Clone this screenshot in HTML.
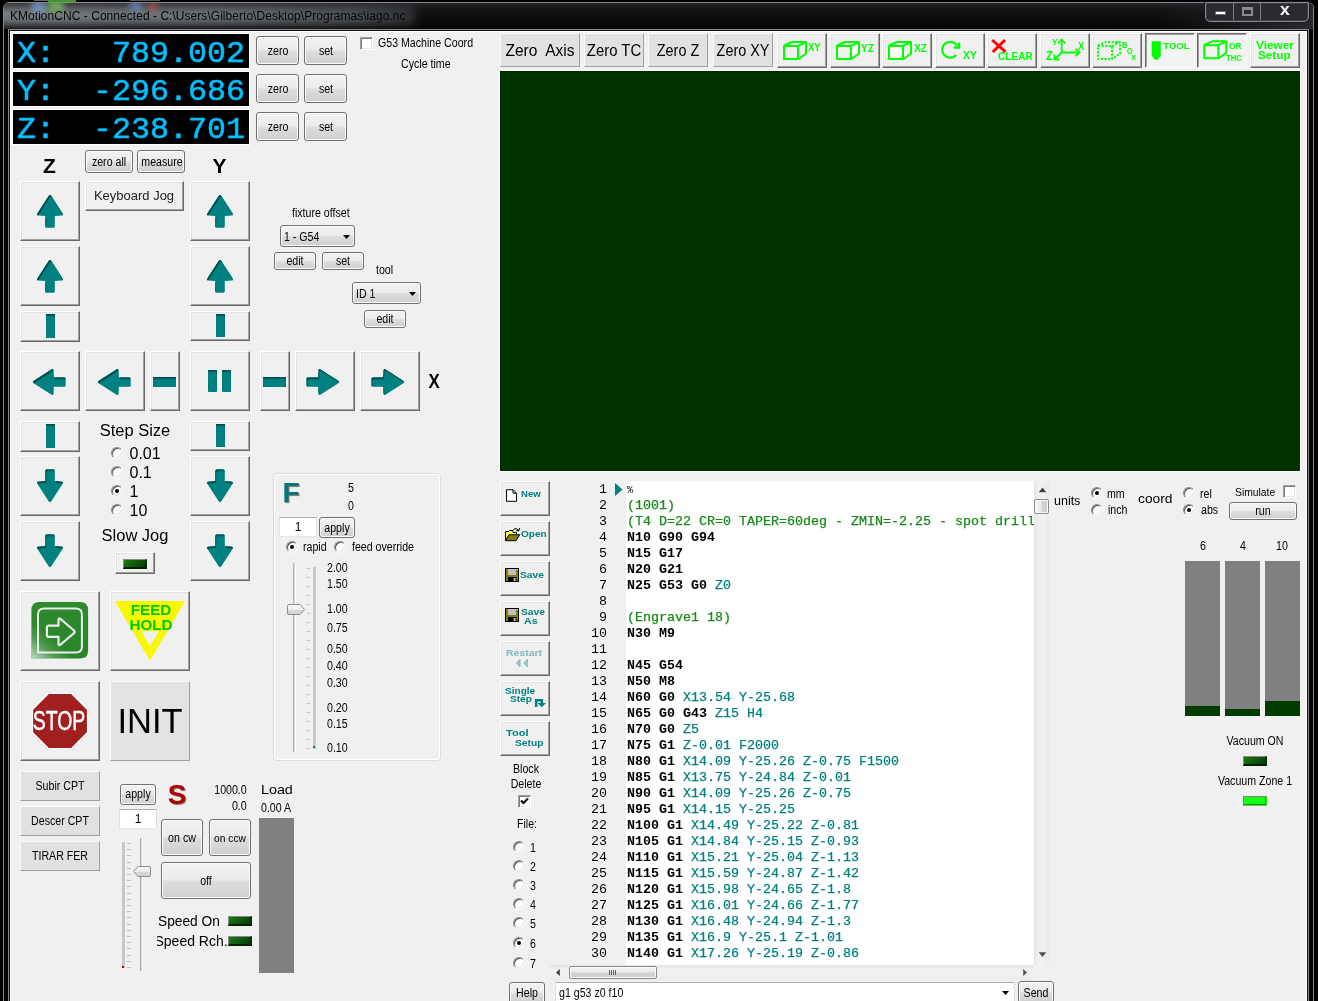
<!DOCTYPE html>
<html><head><meta charset="utf-8"><title>KMotionCNC</title>
<style>
*{box-sizing:border-box;margin:0;padding:0}
html,body{width:1318px;height:1001px;overflow:hidden;background:#000}
body{position:relative;font-family:"Liberation Sans",sans-serif;font-size:11px;color:#000}
div,span.t,svg{position:absolute}
span.t{white-space:nowrap;display:block}
#client{left:10px;top:31px;width:1297px;height:970px;background:#f0f0f0;border-left:1px solid #fff;border-top:1px solid #fff;border-right:1px solid #fff}
.cb{background:#f0f0f0;border:1px solid;border-color:#fff #696969 #696969 #fff;box-shadow:inset -1px -1px 0 #a0a0a0,inset 1px 1px 0 #e3e3e3}
.cbp{background:#f3f3f3;border:1px solid;border-color:#696969 #fff #fff #696969;box-shadow:inset 1px 1px 0 #a0a0a0}
.fb{background:#e1e1e1;border:1px solid;border-color:#fbfbfb #a0a0a0 #a0a0a0 #fbfbfb}
.wb{border:1px solid #707070;border-radius:3px;background:linear-gradient(#f2f2f2 0,#ebebeb 48%,#dddddd 52%,#cfcfcf 100%);box-shadow:inset 0 0 0 1px #fcfcfc;text-align:center}
.ed{background:#fff;border:1px solid;border-color:#abadb3 #dbdfe6 #e3e9ef #e2e3ea}
.dro{background:#000;outline:1px solid #fff}
.rad{width:12px;height:12px;border-radius:50%;background:#fff;border:1px solid;border-color:#8a8a8a #fafafa #fafafa #8a8a8a;box-shadow:inset 1px 1px 0 #5a5a5a, inset -1px -1px 0 #e4e4e4}
.rad.on:after{content:"";position:absolute;left:3px;top:3px;width:4px;height:4px;border-radius:50%;background:#000}
.chk{background:#fff;border:1px solid;border-color:#a0a0a0 #fff #fff #a0a0a0;box-shadow:inset 1px 1px 0 #7a7a7a, inset -1px -1px 0 #e8e8e8}
.led{background:linear-gradient(135deg,#1f7a12 0,#0f5a0c 50%,#073a07 100%);border:solid;border-width:1px 2px 2px 1px;border-color:#8a8a8a #063006 #042004 #8a8a8a}
.ledon{background:#14ff14;border:1px solid;border-color:#808080 #14ff14 #14ff14 #808080;box-shadow:inset -1px -1px 0 #606060}
.tick{background:#c0c0c0;height:1px}
</style></head><body><div id="w" style="left:0;top:0;width:1318px;height:1001px;will-change:transform">

<div style="left:0;top:0;width:1318px;height:1001px;background:#000"></div>
<div style="left:3px;top:2px;width:1311px;height:1010px;border:1px solid #85878b;border-radius:6px 6px 0 0;background:#050507"></div>
<div style="left:4px;top:3px;width:1309px;height:26px;border-radius:5px 5px 0 0;background:linear-gradient(90deg,rgba(0,0,0,0) 0,rgba(0,0,0,0) 88%,rgba(44,45,50,.9) 100%),linear-gradient(#222326 0,#101112 30%,#060607 100%)"></div>
<div style="left:4px;top:3px;width:460px;height:26px;overflow:hidden;border-radius:5px 0 0 0"><div style="left:-14px;top:3px;width:425px;height:19px;background:linear-gradient(90deg,rgba(128,133,138,.95) 0,rgba(118,122,127,.9) 55%,rgba(100,104,108,.75) 85%,rgba(80,83,86,.5) 100%);filter:blur(5px)"></div><div style="left:28px;top:-2px;width:14px;height:12px;background:rgba(120,160,215,.8);filter:blur(3px)"></div><div style="left:44px;top:-3px;width:16px;height:12px;background:rgba(120,190,90,.8);filter:blur(3px)"></div><div style="left:126px;top:-2px;width:12px;height:10px;background:rgba(110,150,210,.7);filter:blur(3px)"></div><div style="left:144px;top:-1px;width:10px;height:9px;background:rgba(200,90,90,.6);filter:blur(3px)"></div></div>
<div style="left:48px;top:0;width:28px;height:2px;background:#3f9a1f"></div><div style="left:34px;top:0;width:14px;height:1px;background:#666"></div><div style="left:130px;top:0;width:30px;height:1px;background:#555"></div>
<span class="t " style="top:10.00px;font-size:12px;line-height:12px;color:#050505;letter-spacing:0.04px;left:10px;">KMotionCNC - Connected - C:\Users\Gilberto\Desktop\Programas\iago.nc</span>
<div style="left:8px;top:29px;width:1301px;height:980px;border:1px solid #8a8c90;background:#101012"></div>
<div style="left:1205px;top:2px;width:104px;height:20px;border:1px solid #85878b;border-radius:0 0 5px 5px;background:#2a2b30;box-shadow:inset 0 0 0 1px #3e3f45,0 0 0 1px #18181a"></div>
<div style="left:1233px;top:2px;width:1px;height:18px;background:#7a7c80"></div>
<div style="left:1260px;top:2px;width:1px;height:18px;background:#7a7c80"></div>
<div style="left:1215px;top:11px;width:11px;height:4px;background:#fff;border:1px solid #666"></div>
<div style="left:1242px;top:7px;width:11px;height:9px;border:2px solid #8a8a8a;border-top-width:3px"></div>
<span class="t " style="top:1.00px;font-size:16.3px;line-height:16.3px;color:#fff;font-weight:bold;left:1134.7px;width:300px;text-align:center;transform:scaleX(1.08);transform-origin:center center;">x</span>
<div id="client"></div>
<svg width="0" height="0" style="left:0;top:0"><defs><filter id="ish" x="-20%" y="-20%" width="140%" height="140%"><feOffset in="SourceAlpha" dx="0.5" dy="1.6" result="o"/><feComposite in="SourceAlpha" in2="o" operator="out" result="e"/><feFlood flood-color="#003838" flood-opacity=".8"/><feComposite in2="e" operator="in"/><feGaussianBlur stdDeviation=".45" result="b"/><feComposite in="b" in2="SourceAlpha" operator="in" result="sh"/><feMerge><feMergeNode in="SourceGraphic"/><feMergeNode in="sh"/></feMerge></filter></defs></svg>
<div class="dro" style="left:13px;top:34px;width:236px;height:34px;"></div>
<span class="t" style="left:16.5px;top:37px;font:30px/34px 'Liberation Mono',monospace;color:#00bfff;-webkit-text-stroke:.55px #00bfff;white-space:pre;transform:scaleX(1.055);transform-origin:left center">X:   789.002</span>
<div class="wb" style="left:256px;top:36px;width:43px;height:29px;"></div>
<span class="t " style="top:45.00px;font-size:12px;line-height:12px;left:127.5px;width:300px;text-align:center;transform:scaleX(0.885);transform-origin:center center;">zero</span>
<div class="wb" style="left:304px;top:36px;width:43px;height:29px;"></div>
<span class="t " style="top:45.00px;font-size:12px;line-height:12px;left:175.5px;width:300px;text-align:center;transform:scaleX(0.885);transform-origin:center center;">set</span>
<div class="dro" style="left:13px;top:72px;width:236px;height:34px;"></div>
<span class="t" style="left:16.5px;top:75px;font:30px/34px 'Liberation Mono',monospace;color:#00bfff;-webkit-text-stroke:.55px #00bfff;white-space:pre;transform:scaleX(1.055);transform-origin:left center">Y:  -296.686</span>
<div class="wb" style="left:256px;top:74px;width:43px;height:29px;"></div>
<span class="t " style="top:83.00px;font-size:12px;line-height:12px;left:127.5px;width:300px;text-align:center;transform:scaleX(0.885);transform-origin:center center;">zero</span>
<div class="wb" style="left:304px;top:74px;width:43px;height:29px;"></div>
<span class="t " style="top:83.00px;font-size:12px;line-height:12px;left:175.5px;width:300px;text-align:center;transform:scaleX(0.885);transform-origin:center center;">set</span>
<div class="dro" style="left:13px;top:110px;width:236px;height:34px;"></div>
<span class="t" style="left:16.5px;top:113px;font:30px/34px 'Liberation Mono',monospace;color:#00bfff;-webkit-text-stroke:.55px #00bfff;white-space:pre;transform:scaleX(1.055);transform-origin:left center">Z:  -238.701</span>
<div class="wb" style="left:256px;top:112px;width:43px;height:29px;"></div>
<span class="t " style="top:121.00px;font-size:12px;line-height:12px;left:127.5px;width:300px;text-align:center;transform:scaleX(0.885);transform-origin:center center;">zero</span>
<div class="wb" style="left:304px;top:112px;width:43px;height:29px;"></div>
<span class="t " style="top:121.00px;font-size:12px;line-height:12px;left:175.5px;width:300px;text-align:center;transform:scaleX(0.885);transform-origin:center center;">set</span>
<div class="chk" style="left:360px;top:37px;width:13px;height:13px;"></div>
<span class="t " style="top:37.00px;font-size:12px;line-height:12px;left:377.5px;transform:scaleX(0.885);transform-origin:left center;">G53 Machine Coord</span>
<span class="t " style="top:58.00px;font-size:12px;line-height:12px;left:401px;transform:scaleX(0.885);transform-origin:left center;">Cycle time</span>
<div class="wb" style="left:85px;top:150px;width:48px;height:23px;"></div>
<span class="t " style="top:156.00px;font-size:12px;line-height:12px;left:-41px;width:300px;text-align:center;transform:scaleX(0.885);transform-origin:center center;">zero all</span>
<div class="wb" style="left:137px;top:150px;width:48px;height:23px;"></div>
<span class="t " style="top:156.00px;font-size:12px;line-height:12px;left:11.5px;width:300px;text-align:center;transform:scaleX(0.885);transform-origin:center center;">measure</span>
<div class="cb" style="left:85px;top:181px;width:99px;height:30px;"></div>
<span class="t " style="top:189.00px;font-size:13px;line-height:13px;color:#222;left:-16px;width:300px;text-align:center;">Keyboard Jog</span>
<span class="t " style="top:155.00px;font-size:21px;line-height:21px;font-weight:bold;left:-100.5px;width:300px;text-align:center;">Z</span>
<span class="t " style="top:155.00px;font-size:21px;line-height:21px;font-weight:bold;left:69.5px;width:300px;text-align:center;">Y</span>
<span class="t " style="top:370.00px;font-size:21px;line-height:21px;font-weight:bold;left:284.3px;width:300px;text-align:center;transform:scaleX(0.8);transform-origin:center center;">X</span>
<span class="t " style="top:207.00px;font-size:12px;line-height:12px;left:291.5px;transform:scaleX(0.885);transform-origin:left center;">fixture offset</span>
<div class="wb" style="left:280px;top:225px;width:75px;height:22px;"></div>
<span class="t " style="top:231.00px;font-size:12px;line-height:12px;left:284px;transform:scaleX(0.885);transform-origin:left center;">1 - G54</span>
<svg style="position:absolute;left:342.5px;top:234.5px;" width="7" height="4" viewBox="0 0 7 4"><path d="M0 0h7L3.5 4z" fill="#000"/></svg>
<div class="wb" style="left:274px;top:252px;width:42px;height:18px;"></div>
<span class="t " style="top:255.00px;font-size:12px;line-height:12px;left:145px;width:300px;text-align:center;transform:scaleX(0.885);transform-origin:center center;">edit</span>
<div class="wb" style="left:322px;top:252px;width:42px;height:18px;"></div>
<span class="t " style="top:255.00px;font-size:12px;line-height:12px;left:193px;width:300px;text-align:center;transform:scaleX(0.885);transform-origin:center center;">set</span>
<span class="t " style="top:264.00px;font-size:12px;line-height:12px;left:375.5px;transform:scaleX(0.885);transform-origin:left center;">tool</span>
<div class="wb" style="left:352px;top:282px;width:69px;height:22px;"></div>
<span class="t " style="top:288.00px;font-size:12px;line-height:12px;left:356px;transform:scaleX(0.885);transform-origin:left center;">ID 1</span>
<svg style="position:absolute;left:408.5px;top:291.5px;" width="7" height="4" viewBox="0 0 7 4"><path d="M0 0h7L3.5 4z" fill="#000"/></svg>
<div class="wb" style="left:364px;top:310px;width:42px;height:18px;"></div>
<span class="t " style="top:313.00px;font-size:12px;line-height:12px;left:235px;width:300px;text-align:center;transform:scaleX(0.885);transform-origin:center center;">edit</span>
<div class="cb" style="left:20px;top:181px;width:60px;height:60px;"></div>
<svg style="left:29.5px;top:190.5px" width="40" height="40" viewBox="-20 -20 40 40"><g filter="url(#ish)"><path transform="rotate(0)" d="M0 -16.3 Q.8 -16 1.5 -15 L12.8 2.6 Q13.6 4.6 11.6 4.6 L4.8 4.9 L4.8 15.2 Q4.8 16.7 3.3 16.7 L-3.3 16.7 Q-4.8 16.7 -4.8 15.2 L-4.8 4.9 L-11.6 4.6 Q-13.6 4.6 -12.8 2.6 L-1.5 -15 Q-.8 -16 0 -16.3 Z" fill="#008080"/></g></svg>
<div class="cb" style="left:20px;top:246px;width:60px;height:60px;"></div>
<svg style="left:29.5px;top:255.5px" width="40" height="40" viewBox="-20 -20 40 40"><g filter="url(#ish)"><path transform="rotate(0)" d="M0 -16.3 Q.8 -16 1.5 -15 L12.8 2.6 Q13.6 4.6 11.6 4.6 L4.8 4.9 L4.8 15.2 Q4.8 16.7 3.3 16.7 L-3.3 16.7 Q-4.8 16.7 -4.8 15.2 L-4.8 4.9 L-11.6 4.6 Q-13.6 4.6 -12.8 2.6 L-1.5 -15 Q-.8 -16 0 -16.3 Z" fill="#008080"/></g></svg>
<div class="cb" style="left:20px;top:311px;width:60px;height:31px;"></div>
<div style="left:46px;top:314px;width:9px;height:24px;background:#008080;box-shadow:inset 0 1.5px 1px #004848"></div>
<div class="cb" style="left:20px;top:421px;width:60px;height:31px;"></div>
<div style="left:46px;top:424px;width:9px;height:24px;background:#008080;box-shadow:inset 0 1.5px 1px #004848"></div>
<div class="cb" style="left:20px;top:456px;width:60px;height:60px;"></div>
<svg style="left:29.5px;top:465.5px" width="40" height="40" viewBox="-20 -20 40 40"><g filter="url(#ish)"><path transform="rotate(180)" d="M0 -16.3 Q.8 -16 1.5 -15 L12.8 2.6 Q13.6 4.6 11.6 4.6 L4.8 4.9 L4.8 15.2 Q4.8 16.7 3.3 16.7 L-3.3 16.7 Q-4.8 16.7 -4.8 15.2 L-4.8 4.9 L-11.6 4.6 Q-13.6 4.6 -12.8 2.6 L-1.5 -15 Q-.8 -16 0 -16.3 Z" fill="#008080"/></g></svg>
<div class="cb" style="left:20px;top:521px;width:60px;height:60px;"></div>
<svg style="left:29.5px;top:530.5px" width="40" height="40" viewBox="-20 -20 40 40"><g filter="url(#ish)"><path transform="rotate(180)" d="M0 -16.3 Q.8 -16 1.5 -15 L12.8 2.6 Q13.6 4.6 11.6 4.6 L4.8 4.9 L4.8 15.2 Q4.8 16.7 3.3 16.7 L-3.3 16.7 Q-4.8 16.7 -4.8 15.2 L-4.8 4.9 L-11.6 4.6 Q-13.6 4.6 -12.8 2.6 L-1.5 -15 Q-.8 -16 0 -16.3 Z" fill="#008080"/></g></svg>
<div class="cb" style="left:190px;top:181px;width:60px;height:60px;"></div>
<svg style="left:199.5px;top:190.5px" width="40" height="40" viewBox="-20 -20 40 40"><g filter="url(#ish)"><path transform="rotate(0)" d="M0 -16.3 Q.8 -16 1.5 -15 L12.8 2.6 Q13.6 4.6 11.6 4.6 L4.8 4.9 L4.8 15.2 Q4.8 16.7 3.3 16.7 L-3.3 16.7 Q-4.8 16.7 -4.8 15.2 L-4.8 4.9 L-11.6 4.6 Q-13.6 4.6 -12.8 2.6 L-1.5 -15 Q-.8 -16 0 -16.3 Z" fill="#008080"/></g></svg>
<div class="cb" style="left:190px;top:246px;width:60px;height:60px;"></div>
<svg style="left:199.5px;top:255.5px" width="40" height="40" viewBox="-20 -20 40 40"><g filter="url(#ish)"><path transform="rotate(0)" d="M0 -16.3 Q.8 -16 1.5 -15 L12.8 2.6 Q13.6 4.6 11.6 4.6 L4.8 4.9 L4.8 15.2 Q4.8 16.7 3.3 16.7 L-3.3 16.7 Q-4.8 16.7 -4.8 15.2 L-4.8 4.9 L-11.6 4.6 Q-13.6 4.6 -12.8 2.6 L-1.5 -15 Q-.8 -16 0 -16.3 Z" fill="#008080"/></g></svg>
<div class="cb" style="left:190px;top:311px;width:60px;height:30px;"></div>
<div style="left:216px;top:314px;width:9px;height:23px;background:#008080;box-shadow:inset 0 1.5px 1px #004848"></div>
<div class="cb" style="left:190px;top:421px;width:60px;height:30px;"></div>
<div style="left:216px;top:424px;width:9px;height:23px;background:#008080;box-shadow:inset 0 1.5px 1px #004848"></div>
<div class="cb" style="left:190px;top:456px;width:60px;height:60px;"></div>
<svg style="left:199.5px;top:465.5px" width="40" height="40" viewBox="-20 -20 40 40"><g filter="url(#ish)"><path transform="rotate(180)" d="M0 -16.3 Q.8 -16 1.5 -15 L12.8 2.6 Q13.6 4.6 11.6 4.6 L4.8 4.9 L4.8 15.2 Q4.8 16.7 3.3 16.7 L-3.3 16.7 Q-4.8 16.7 -4.8 15.2 L-4.8 4.9 L-11.6 4.6 Q-13.6 4.6 -12.8 2.6 L-1.5 -15 Q-.8 -16 0 -16.3 Z" fill="#008080"/></g></svg>
<div class="cb" style="left:190px;top:521px;width:60px;height:60px;"></div>
<svg style="left:199.5px;top:530.5px" width="40" height="40" viewBox="-20 -20 40 40"><g filter="url(#ish)"><path transform="rotate(180)" d="M0 -16.3 Q.8 -16 1.5 -15 L12.8 2.6 Q13.6 4.6 11.6 4.6 L4.8 4.9 L4.8 15.2 Q4.8 16.7 3.3 16.7 L-3.3 16.7 Q-4.8 16.7 -4.8 15.2 L-4.8 4.9 L-11.6 4.6 Q-13.6 4.6 -12.8 2.6 L-1.5 -15 Q-.8 -16 0 -16.3 Z" fill="#008080"/></g></svg>
<div class="cb" style="left:20px;top:351px;width:60px;height:60px;"></div>
<svg style="left:28.799999999999997px;top:361.5px" width="40" height="40" viewBox="-20 -20 40 40"><g filter="url(#ish)"><path transform="rotate(270)" d="M0 -16.3 Q.8 -16 1.5 -15 L12.8 2.6 Q13.6 4.6 11.6 4.6 L4.8 4.9 L4.8 15.2 Q4.8 16.7 3.3 16.7 L-3.3 16.7 Q-4.8 16.7 -4.8 15.2 L-4.8 4.9 L-11.6 4.6 Q-13.6 4.6 -12.8 2.6 L-1.5 -15 Q-.8 -16 0 -16.3 Z" fill="#008080"/></g></svg>
<div class="cb" style="left:85px;top:351px;width:60px;height:60px;"></div>
<svg style="left:93.8px;top:361.5px" width="40" height="40" viewBox="-20 -20 40 40"><g filter="url(#ish)"><path transform="rotate(270)" d="M0 -16.3 Q.8 -16 1.5 -15 L12.8 2.6 Q13.6 4.6 11.6 4.6 L4.8 4.9 L4.8 15.2 Q4.8 16.7 3.3 16.7 L-3.3 16.7 Q-4.8 16.7 -4.8 15.2 L-4.8 4.9 L-11.6 4.6 Q-13.6 4.6 -12.8 2.6 L-1.5 -15 Q-.8 -16 0 -16.3 Z" fill="#008080"/></g></svg>
<div class="cb" style="left:150px;top:351px;width:30px;height:60px;"></div>
<div style="left:153px;top:377px;width:23px;height:10px;background:#008080;box-shadow:inset 0 1.5px 1px #004848"></div>
<div class="cb" style="left:190px;top:351px;width:60px;height:60px;"></div>
<div style="left:208px;top:370px;width:9px;height:22px;background:#008080;border-radius:1px;box-shadow:inset 0 1.5px 1px #004848"></div>
<div style="left:222px;top:370px;width:9px;height:22px;background:#008080;border-radius:1px;box-shadow:inset 0 1.5px 1px #004848"></div>
<div class="cb" style="left:260px;top:351px;width:30px;height:60px;"></div>
<div style="left:263px;top:377px;width:23px;height:10px;background:#008080;box-shadow:inset 0 1.5px 1px #004848"></div>
<div class="cb" style="left:295px;top:351px;width:60px;height:60px;"></div>
<svg style="left:303.2px;top:361.5px" width="40" height="40" viewBox="-20 -20 40 40"><g filter="url(#ish)"><path transform="rotate(90)" d="M0 -16.3 Q.8 -16 1.5 -15 L12.8 2.6 Q13.6 4.6 11.6 4.6 L4.8 4.9 L4.8 15.2 Q4.8 16.7 3.3 16.7 L-3.3 16.7 Q-4.8 16.7 -4.8 15.2 L-4.8 4.9 L-11.6 4.6 Q-13.6 4.6 -12.8 2.6 L-1.5 -15 Q-.8 -16 0 -16.3 Z" fill="#008080"/></g></svg>
<div class="cb" style="left:360px;top:351px;width:60px;height:60px;"></div>
<svg style="left:368.2px;top:361.5px" width="40" height="40" viewBox="-20 -20 40 40"><g filter="url(#ish)"><path transform="rotate(90)" d="M0 -16.3 Q.8 -16 1.5 -15 L12.8 2.6 Q13.6 4.6 11.6 4.6 L4.8 4.9 L4.8 15.2 Q4.8 16.7 3.3 16.7 L-3.3 16.7 Q-4.8 16.7 -4.8 15.2 L-4.8 4.9 L-11.6 4.6 Q-13.6 4.6 -12.8 2.6 L-1.5 -15 Q-.8 -16 0 -16.3 Z" fill="#008080"/></g></svg>
<span class="t " style="top:423.00px;font-size:16px;line-height:16px;left:-15.199999999999989px;width:300px;text-align:center;transform:scaleX(1.03);transform-origin:center center;">Step Size</span>
<div class="rad" style="left:111px;top:447px;width:12px;height:12px;"></div>
<span class="t " style="top:446.00px;font-size:16px;line-height:16px;left:129.5px;">0.01</span>
<div class="rad" style="left:111px;top:466px;width:12px;height:12px;"></div>
<span class="t " style="top:465.00px;font-size:16px;line-height:16px;left:129.5px;">0.1</span>
<div class="rad on" style="left:111px;top:485px;width:12px;height:12px;"></div>
<span class="t " style="top:484.00px;font-size:16px;line-height:16px;left:129.5px;">1</span>
<div class="rad" style="left:111px;top:504px;width:12px;height:12px;"></div>
<span class="t " style="top:503.00px;font-size:16px;line-height:16px;left:129.5px;">10</span>
<span class="t " style="top:528.00px;font-size:16px;line-height:16px;left:-15px;width:300px;text-align:center;transform:scaleX(1.03);transform-origin:center center;">Slow Jog</span>
<div class="cb" style="left:115px;top:552px;width:40px;height:22px;"></div>
<div class="led" style="left:123px;top:559px;width:24px;height:10px;"></div>
<div class="cb" style="left:20px;top:591px;width:80px;height:80px;"></div>
<svg style="position:absolute;left:31px;top:601px;" width="58" height="59" viewBox="0 0 58 59"><defs><linearGradient id="gg" x1="0" y1="0" x2="0" y2="1"><stop offset="0" stop-color="#2d8a2d"/><stop offset="1" stop-color="#2a8429"/></linearGradient>
<linearGradient id="gw" x1="0" y1="1" x2=".55" y2=".35"><stop offset="0" stop-color="#fff" stop-opacity=".7"/><stop offset=".35" stop-color="#fff" stop-opacity=".18"/><stop offset=".6" stop-color="#fff" stop-opacity="0"/></linearGradient></defs>
<path d="M8.5 .9 H49 Q57.1 .9 57.1 9 V49.5 Q57.1 57.6 49 57.6 H.4 V9 Q.4 .9 8.5 .9 Z" fill="url(#gg)"/>
<path d="M8.5 .9 H49 Q57.1 .9 57.1 9 V49.5 Q57.1 57.6 49 57.6 H.4 V9 Q.4 .9 8.5 .9 Z" fill="url(#gw)"/>
<path d="M7 51.5 V13.4 Q7 7.4 13 7.4 H44.9 Q50.9 7.4 50.9 13.4 V45.5 Q50.9 51.5 44.9 51.5 Z" fill="none" stroke="#ececec" stroke-width="2"/>
<path d="M15.9 26.7 Q15.9 24.7 17.9 24.7 H27.5 V19.3 Q27.5 16.4 29.7 18.2 L43 29.5 Q44.4 30.9 43 32.2 L29.7 43.5 Q27.5 45.3 27.5 42.4 V35.9 H17.9 Q15.9 35.9 15.9 33.9 Z" fill="none" stroke="#ececec" stroke-width="2.2" stroke-linejoin="round"/></svg>
<div class="cb" style="left:110px;top:591px;width:80px;height:80px;"></div>
<svg style="position:absolute;left:114px;top:599px;" width="72" height="62" viewBox="0 0 72 62"><path d="M3 2 H69 Q71 2 70 4 L37 60 Q36 61.5 35 60 L2 4 Q1 2 3 2 Z" fill="#f8f800"/><path d="M27 32 H45 L36 47 Z" fill="#f0f0f0"/></svg>
<span class="t " style="top:602.00px;font-size:15.5px;line-height:15.5px;color:#00c800;font-weight:bold;left:0.5999999999999943px;width:300px;text-align:center;transform:scaleX(0.98);transform-origin:center center;">FEED</span>
<span class="t " style="top:617.00px;font-size:15.5px;line-height:15.5px;color:#00c800;font-weight:bold;left:0.5999999999999943px;width:300px;text-align:center;transform:scaleX(0.98);transform-origin:center center;">HOLD</span>
<div class="cb" style="left:20px;top:681px;width:80px;height:80px;"></div>
<svg style="position:absolute;left:31px;top:692px;" width="58" height="58" viewBox="0 0 58 58"><path d="M17.5 1.5 H40.5 L56.5 17.5 V40.5 L40.5 56.5 H17.5 L1.5 40.5 V17.5 Z" fill="#a02020" stroke="#fff" stroke-width="1.2"/></svg>
<span class="t " style="top:708.00px;font-size:27px;line-height:27px;color:#fff;left:-90.8px;width:300px;text-align:center;transform:scaleX(0.72);transform-origin:center center;-webkit-text-stroke:.5px #fff;">STOP</span>
<div class="fb" style="left:110px;top:681px;width:80px;height:80px;background:#e3e3e3"></div>
<span class="t " style="top:704.00px;font-size:34.5px;line-height:34.5px;left:0px;width:300px;text-align:center;">INIT</span>
<div class="fb" style="left:20px;top:771px;width:80px;height:30px;"></div>
<span class="t " style="top:780.00px;font-size:12px;line-height:12px;left:-90.3px;width:300px;text-align:center;transform:scaleX(0.885);transform-origin:center center;">Subir CPT</span>
<div class="fb" style="left:20px;top:806px;width:80px;height:30px;"></div>
<span class="t " style="top:815.00px;font-size:12px;line-height:12px;left:-90.3px;width:300px;text-align:center;transform:scaleX(0.885);transform-origin:center center;">Descer CPT</span>
<div class="fb" style="left:20px;top:841px;width:80px;height:30px;"></div>
<span class="t " style="top:850.00px;font-size:12px;line-height:12px;left:-90.3px;width:300px;text-align:center;transform:scaleX(0.885);transform-origin:center center;">TIRAR FER</span>
<div class="wb" style="left:120px;top:784px;width:36px;height:21px;"></div>
<span class="t " style="top:788.00px;font-size:12px;line-height:12px;left:-12px;width:300px;text-align:center;transform:scaleX(0.885);transform-origin:center center;">apply</span>
<div class="ed" style="left:119px;top:809px;width:38px;height:20px;"></div>
<span class="t " style="top:813.00px;font-size:12px;line-height:12px;left:-12px;width:300px;text-align:center;">1</span>
<span class="t " style="top:781.00px;font-size:28px;line-height:28px;color:#b00000;font-weight:bold;left:27px;width:300px;text-align:center;text-shadow:1px 1px 1px #777;">S</span>
<span class="t " style="top:784.00px;font-size:12px;line-height:12px;right:1071.5px;transform:scaleX(0.885);transform-origin:right center;">1000.0</span>
<span class="t " style="top:800.00px;font-size:12px;line-height:12px;right:1071.5px;transform:scaleX(0.885);transform-origin:right center;">0.0</span>
<span class="t " style="top:783.00px;font-size:13px;line-height:13px;left:260.5px;transform:scaleX(1.1);transform-origin:left center;">Load</span>
<span class="t " style="top:802.00px;font-size:12px;line-height:12px;left:261px;transform:scaleX(0.885);transform-origin:left center;">0.00 A</span>
<div class="" style="left:259px;top:818px;width:35px;height:155px;background:#808080"></div>
<div class="wb" style="left:161px;top:819px;width:42px;height:37px;"></div>
<span class="t " style="top:832.00px;font-size:12px;line-height:12px;left:32px;width:300px;text-align:center;transform:scaleX(0.885);transform-origin:center center;">on cw</span>
<div class="wb" style="left:209px;top:819px;width:42px;height:37px;"></div>
<span class="t " style="top:833.00px;font-size:11px;line-height:11px;left:80px;width:300px;text-align:center;transform:scaleX(0.93);transform-origin:center center;">on ccw</span>
<div class="wb" style="left:161px;top:862px;width:90px;height:37px;"></div>
<span class="t " style="top:875.00px;font-size:12px;line-height:12px;left:56px;width:300px;text-align:center;transform:scaleX(0.885);transform-origin:center center;">off</span>
<span class="t " style="top:914.00px;font-size:14px;line-height:14px;left:158.2px;transform:scaleX(0.98);transform-origin:left center;">Speed On</span>
<div class="led" style="left:228px;top:916px;width:24px;height:10px;"></div>
<div style="left:157px;top:930px;width:70px;height:20px;overflow:hidden"><span class="t" style="left:-2.5px;top:4px;font-size:14px;line-height:14px">Speed Rch.</span></div>
<div class="led" style="left:228px;top:936px;width:24px;height:10px;"></div>
<div class="" style="left:122px;top:842px;width:3px;height:126px;background:#c8c8c8"></div>
<div class="tick" style="left:127px;top:843.0px;width:4px;height:1px;"></div>
<div class="tick" style="left:127px;top:849.2px;width:4px;height:1px;"></div>
<div class="tick" style="left:127px;top:855.4px;width:4px;height:1px;"></div>
<div class="tick" style="left:127px;top:861.6px;width:4px;height:1px;"></div>
<div class="tick" style="left:127px;top:867.8px;width:4px;height:1px;"></div>
<div class="tick" style="left:127px;top:874.0px;width:4px;height:1px;"></div>
<div class="tick" style="left:127px;top:880.2px;width:4px;height:1px;"></div>
<div class="tick" style="left:127px;top:886.4px;width:4px;height:1px;"></div>
<div class="tick" style="left:127px;top:892.6px;width:4px;height:1px;"></div>
<div class="tick" style="left:127px;top:898.8px;width:4px;height:1px;"></div>
<div class="tick" style="left:127px;top:905.0px;width:4px;height:1px;"></div>
<div class="tick" style="left:127px;top:911.2px;width:4px;height:1px;"></div>
<div class="tick" style="left:127px;top:917.4px;width:4px;height:1px;"></div>
<div class="tick" style="left:127px;top:923.6px;width:4px;height:1px;"></div>
<div class="tick" style="left:127px;top:929.8px;width:4px;height:1px;"></div>
<div class="tick" style="left:127px;top:936.0px;width:4px;height:1px;"></div>
<div class="tick" style="left:127px;top:942.2px;width:4px;height:1px;"></div>
<div class="tick" style="left:127px;top:948.4px;width:4px;height:1px;"></div>
<div class="tick" style="left:127px;top:954.6px;width:4px;height:1px;"></div>
<div class="tick" style="left:127px;top:960.8px;width:4px;height:1px;"></div>
<div class="tick" style="left:127px;top:967.0px;width:4px;height:1px;"></div>
<div class="" style="left:140px;top:838px;width:3px;height:133px;background:#d0d0d0;border-left:1px solid #b0b0b0;border-right:1px solid #fff"></div>
<svg style="position:absolute;left:133px;top:866px;" width="18" height="11" viewBox="0 0 18 11"><defs><linearGradient id="tg1" x1="0" y1="0" x2="0" y2="1"><stop offset="0" stop-color="#fbfbfb"/><stop offset=".5" stop-color="#ececec"/><stop offset=".55" stop-color="#dadada"/><stop offset="1" stop-color="#d0d0d0"/></linearGradient></defs><path d="M5 .5 H16 Q17.5 .5 17.5 2 V9 Q17.5 10.5 16 10.5 H5 L.5 5.5 Z" fill="url(#tg1)" stroke="#8e8e8e"/></svg>
<div class="" style="left:122px;top:966px;width:2px;height:2px;background:#c00000"></div>
<div class="" style="left:273px;top:473px;width:168px;height:288px;border:1px solid #d5dfe5;border-radius:4px;box-shadow:inset 0 0 0 1px #fff"></div>
<span class="t " style="top:479.00px;font-size:28px;line-height:28px;color:#007878;font-weight:bold;left:141px;width:300px;text-align:center;text-shadow:1px 1px 1px #777;">F</span>
<span class="t " style="top:482.00px;font-size:12px;line-height:12px;left:200.5px;width:300px;text-align:center;transform:scaleX(0.885);transform-origin:center center;">5</span>
<span class="t " style="top:500.00px;font-size:12px;line-height:12px;left:200.5px;width:300px;text-align:center;transform:scaleX(0.885);transform-origin:center center;">0</span>
<div class="ed" style="left:279px;top:517px;width:38px;height:20px;"></div>
<span class="t " style="top:521.00px;font-size:12px;line-height:12px;left:148px;width:300px;text-align:center;">1</span>
<div class="wb" style="left:319px;top:517px;width:36px;height:21px;"></div>
<span class="t " style="top:522.00px;font-size:12px;line-height:12px;left:187px;width:300px;text-align:center;transform:scaleX(0.885);transform-origin:center center;">apply</span>
<div class="rad on" style="left:286px;top:541px;width:12px;height:12px;"></div>
<span class="t " style="top:541.00px;font-size:12px;line-height:12px;left:303px;transform:scaleX(0.885);transform-origin:left center;">rapid</span>
<div class="rad" style="left:334px;top:541px;width:12px;height:12px;"></div>
<span class="t " style="top:541.00px;font-size:12px;line-height:12px;left:351.5px;transform:scaleX(0.885);transform-origin:left center;">feed override</span>
<div class="" style="left:293px;top:563px;width:3px;height:189px;background:#d8d8d8;border-left:1px solid #b0b0b0;border-right:1px solid #fff"></div>
<div class="" style="left:313px;top:567px;width:3px;height:182px;background:#c8c8c8"></div>
<span class="t " style="top:562.00px;font-size:12px;line-height:12px;left:326.5px;transform:scaleX(0.885);transform-origin:left center;">2.00</span>
<span class="t " style="top:578.00px;font-size:12px;line-height:12px;left:326.5px;transform:scaleX(0.885);transform-origin:left center;">1.50</span>
<span class="t " style="top:603.00px;font-size:12px;line-height:12px;left:326.5px;transform:scaleX(0.885);transform-origin:left center;">1.00</span>
<span class="t " style="top:622.00px;font-size:12px;line-height:12px;left:326.5px;transform:scaleX(0.885);transform-origin:left center;">0.75</span>
<span class="t " style="top:643.00px;font-size:12px;line-height:12px;left:326.5px;transform:scaleX(0.885);transform-origin:left center;">0.50</span>
<span class="t " style="top:660.00px;font-size:12px;line-height:12px;left:326.5px;transform:scaleX(0.885);transform-origin:left center;">0.40</span>
<span class="t " style="top:677.00px;font-size:12px;line-height:12px;left:326.5px;transform:scaleX(0.885);transform-origin:left center;">0.30</span>
<span class="t " style="top:702.00px;font-size:12px;line-height:12px;left:326.5px;transform:scaleX(0.885);transform-origin:left center;">0.20</span>
<span class="t " style="top:718.00px;font-size:12px;line-height:12px;left:326.5px;transform:scaleX(0.885);transform-origin:left center;">0.15</span>
<span class="t " style="top:742.00px;font-size:12px;line-height:12px;left:326.5px;transform:scaleX(0.885);transform-origin:left center;">0.10</span>
<div class="tick" style="left:307px;top:568px;width:3px;height:1px;"></div>
<div class="tick" style="left:307px;top:577px;width:3px;height:1px;"></div>
<div class="tick" style="left:307px;top:586px;width:3px;height:1px;"></div>
<div class="tick" style="left:307px;top:595px;width:3px;height:1px;"></div>
<div class="tick" style="left:307px;top:604px;width:3px;height:1px;"></div>
<div class="tick" style="left:307px;top:613px;width:3px;height:1px;"></div>
<div class="tick" style="left:307px;top:622px;width:3px;height:1px;"></div>
<div class="tick" style="left:307px;top:631px;width:3px;height:1px;"></div>
<div class="tick" style="left:307px;top:640px;width:3px;height:1px;"></div>
<div class="tick" style="left:307px;top:649px;width:3px;height:1px;"></div>
<div class="tick" style="left:307px;top:658px;width:3px;height:1px;"></div>
<div class="tick" style="left:307px;top:667px;width:3px;height:1px;"></div>
<div class="tick" style="left:307px;top:676px;width:3px;height:1px;"></div>
<div class="tick" style="left:307px;top:685px;width:3px;height:1px;"></div>
<div class="tick" style="left:307px;top:694px;width:3px;height:1px;"></div>
<div class="tick" style="left:307px;top:703px;width:3px;height:1px;"></div>
<div class="tick" style="left:307px;top:712px;width:3px;height:1px;"></div>
<div class="tick" style="left:307px;top:721px;width:3px;height:1px;"></div>
<div class="tick" style="left:307px;top:730px;width:3px;height:1px;"></div>
<div class="tick" style="left:307px;top:739px;width:3px;height:1px;"></div>
<div class="tick" style="left:307px;top:748px;width:3px;height:1px;"></div>
<svg style="position:absolute;left:287px;top:604px;" width="18" height="11" viewBox="0 0 18 11"><path d="M2 .5 H13 L17.5 5.5 L13 10.5 H2 Q.5 10.5 .5 9 V2 Q.5 .5 2 .5 Z" fill="url(#tg1)" stroke="#8e8e8e"/></svg>
<div class="" style="left:313px;top:746px;width:2px;height:2px;background:#008080"></div>
<div class="fb" style="left:500px;top:33px;width:80px;height:34px;"></div>
<span class="t " style="top:43.00px;font-size:16px;line-height:16px;left:389.5px;width:300px;text-align:center;transform:scaleX(0.97);transform-origin:center center;white-space:pre;">Zero  Axis</span>
<div class="fb" style="left:584px;top:33px;width:60px;height:34px;"></div>
<span class="t " style="top:43.00px;font-size:16px;line-height:16px;left:463.5px;width:300px;text-align:center;transform:scaleX(0.93);transform-origin:center center;white-space:pre;">Zero TC</span>
<div class="fb" style="left:648px;top:33px;width:60px;height:34px;"></div>
<span class="t " style="top:43.00px;font-size:16px;line-height:16px;left:527.5px;width:300px;text-align:center;transform:scaleX(0.9);transform-origin:center center;white-space:pre;">Zero Z</span>
<div class="fb" style="left:713px;top:33px;width:60px;height:34px;"></div>
<span class="t " style="top:43.00px;font-size:16px;line-height:16px;left:592.5px;width:300px;text-align:center;transform:scaleX(0.9);transform-origin:center center;white-space:pre;">Zero XY</span>
<div class="cb" style="left:777px;top:33px;width:50px;height:35px;"></div>
<svg style="position:absolute;left:777px;top:33px;" width="50" height="35" viewBox="0 0 50 35"><g transform="translate(0,0)"><path d="M6 12 L14.5 8 H30 L22 12 Z" fill="#fff"/><g fill="none" stroke="#00ff00" stroke-width="2" stroke-linejoin="round"><rect x="7" y="13" width="14" height="13"/><path d="M7 12.5 L15 9 H29 V20.5 L21.5 26 M21 13 L29 9"/></g></g></svg>
<span class="t " style="top:42.00px;font-size:10.5px;line-height:10.5px;color:#00ff00;font-weight:bold;left:808.2px;transform:scaleX(0.9);transform-origin:left center;">XY</span>
<div class="cb" style="left:830px;top:33px;width:50px;height:35px;"></div>
<svg style="position:absolute;left:830px;top:33px;" width="50" height="35" viewBox="0 0 50 35"><g transform="translate(0,0)"><path d="M22 12 L30 8 V21 L22 27 Z" fill="#fff"/><g fill="none" stroke="#00ff00" stroke-width="2" stroke-linejoin="round"><rect x="7" y="13" width="14" height="13"/><path d="M7 12.5 L15 9 H29 V20.5 L21.5 26 M21 13 L29 9"/></g></g></svg>
<span class="t " style="top:43.00px;font-size:10.5px;line-height:10.5px;color:#00ff00;font-weight:bold;left:861.2px;transform:scaleX(0.95);transform-origin:left center;">YZ</span>
<div class="cb" style="left:882px;top:33px;width:50px;height:35px;"></div>
<svg style="position:absolute;left:882px;top:33px;" width="50" height="35" viewBox="0 0 50 35"><g transform="translate(0,0)"><rect x="6" y="12" width="16" height="15" fill="#fff"/><g fill="none" stroke="#00ff00" stroke-width="2" stroke-linejoin="round"><rect x="7" y="13" width="14" height="13"/><path d="M7 12.5 L15 9 H29 V20.5 L21.5 26 M21 13 L29 9"/></g></g></svg>
<span class="t " style="top:43.00px;font-size:10.5px;line-height:10.5px;color:#00ff00;font-weight:bold;left:913.8px;transform:scaleX(0.95);transform-origin:left center;">XZ</span>
<div class="cb" style="left:935px;top:33px;width:50px;height:35px;"></div>
<svg style="position:absolute;left:935px;top:33px;" width="50" height="35" viewBox="0 0 50 35"><g transform="translate(-1.1,.5)"><path d="M23 12 A8 8 0 1 0 22.3 21.5" fill="none" stroke="#00ff00" stroke-width="2.2"/><path d="M20 14 H25.2 V9" fill="none" stroke="#00ff00" stroke-width="2.4"/></g></svg>
<span class="t " style="top:51.00px;font-size:10px;line-height:10px;color:#00ff00;font-weight:bold;left:963px;transform:scaleX(1.04);transform-origin:left center;">XY</span>
<div class="cb" style="left:987px;top:33px;width:50px;height:35px;"></div>
<svg style="position:absolute;left:987px;top:33px;" width="50" height="35" viewBox="0 0 50 35"><path d="M5.2 7 L18.5 18.8 M18 7 L5.8 19" stroke="#ff0000" stroke-width="3" fill="none"/></svg>
<span class="t " style="top:52.00px;font-size:10px;line-height:10px;color:#00ff00;font-weight:bold;left:997.5px;transform:scaleX(1.01);transform-origin:left center;">CLEAR</span>
<div class="cb" style="left:1040px;top:33px;width:50px;height:35px;"></div>
<svg style="position:absolute;left:1040px;top:33px;" width="50" height="35" viewBox="0 0 50 35"><g fill="none" stroke="#00ff00" stroke-width="1.8"><path d="M21.7 6.5 V19.5 H39.5 M21.7 19.5 L14.8 26.2"/><path d="M18 10.5 L21.7 6.5 L25.4 10.5 M35.5 16 L39.5 19.5 L35.5 23 M14.5 21.5 V26.5 H19.5"/></g></svg>
<span class="t " style="top:38.00px;font-size:8.5px;line-height:8.5px;color:#00ff00;font-weight:bold;left:1052px;transform:scaleX(1.0);transform-origin:left center;">Y</span>
<span class="t " style="top:42.00px;font-size:10px;line-height:10px;color:#00ff00;font-weight:bold;left:1077.8px;transform:scaleX(0.95);transform-origin:left center;">X</span>
<span class="t " style="top:50.00px;font-size:12px;line-height:12px;color:#00ff00;font-weight:bold;left:1045.5px;transform:scaleX(0.95);transform-origin:left center;">Z</span>
<div class="cb" style="left:1092px;top:33px;width:50px;height:35px;"></div>
<svg style="position:absolute;left:1092px;top:33px;" width="50" height="35" viewBox="0 0 50 35"><g transform="translate(-1,0)"><g fill="none" stroke="#00ff00" stroke-width="2" stroke-linejoin="round" stroke-dasharray="2 1.6"><rect x="7" y="13" width="14" height="13"/><path d="M7 12.5 L15 9 H29 V20.5 L21.5 26 M21 13 L29 9"/></g></g></svg>
<span class="t " style="top:40.00px;font-size:9.5px;line-height:9.5px;color:#00ff00;font-weight:bold;left:1122.4px;transform:scaleX(0.8);transform-origin:left center;">B</span>
<span class="t " style="top:47.00px;font-size:8.5px;line-height:8.5px;color:#00ff00;font-weight:bold;left:1126.6px;transform:scaleX(0.85);transform-origin:left center;">O</span>
<span class="t " style="top:54.00px;font-size:8px;line-height:8px;color:#00ff00;font-weight:bold;left:1131px;transform:scaleX(0.95);transform-origin:left center;">X</span>
<div class="cbp" style="left:1145px;top:33px;width:50px;height:35px;"></div>
<svg style="position:absolute;left:1145px;top:33px;" width="50" height="35" viewBox="0 0 50 35"><path d="M6.7 8.2 H15.8 V22.5 L12.8 26.7 H9.7 L6.7 22.5 Z" fill="#00ff00"/></svg>
<span class="t " style="top:41.00px;font-size:9.5px;line-height:9.5px;color:#00ff00;font-weight:bold;left:1163.3px;transform:scaleX(1.0);transform-origin:left center;">TOOL</span>
<div class="cbp" style="left:1197px;top:33px;width:50px;height:35px;"></div>
<svg style="position:absolute;left:1197px;top:33px;" width="50" height="35" viewBox="0 0 50 35"><g transform="translate(0.3,-0.7)"><g fill="none" stroke="#00ff00" stroke-width="2" stroke-linejoin="round"><rect x="7" y="13" width="14" height="13"/><path d="M7 12.5 L15 9 H29 V20.5 L21.5 26 M21 13 L29 9"/></g></g></svg>
<span class="t " style="top:42.00px;font-size:8.5px;line-height:8.5px;color:#00ff00;font-weight:bold;left:1228.8px;transform:scaleX(0.98);transform-origin:left center;">OR</span>
<span class="t " style="top:54.00px;font-size:8.5px;line-height:8.5px;color:#00ff00;font-weight:bold;left:1226.4px;transform:scaleX(0.9);transform-origin:left center;">THC</span>
<div class="cb" style="left:1250px;top:33px;width:50px;height:35px;"></div>
<svg style="position:absolute;left:1250px;top:33px;" width="50" height="35" viewBox="0 0 50 35"></svg>
<span class="t " style="top:40.00px;font-size:11.5px;line-height:11.5px;color:#00ff00;font-weight:bold;left:1255.6px;transform:scaleX(1.03);transform-origin:left center;">Viewer</span>
<span class="t " style="top:50.00px;font-size:11.5px;line-height:11.5px;color:#00ff00;font-weight:bold;left:1257.6px;transform:scaleX(1.02);transform-origin:left center;">Setup</span>
<div class="" style="left:499px;top:70px;width:802px;height:402px;background:#003300;border:1px solid #fff;box-shadow:inset 1px 1px 0 #002400"></div>
<div class="cb" style="left:500px;top:481px;width:50px;height:35px;"></div>
<svg style="position:absolute;left:500px;top:481px;" width="50" height="35" viewBox="0 0 50 35"><path d="M6.5 8.7 H13 L16.5 12.2 V20.3 H6.5 Z" fill="#fff" stroke="#000"/><path d="M13 8.7 V12.2 H16.5" fill="none" stroke="#000"/></svg>
<span class="t " style="top:489.00px;font-size:9.5px;line-height:9.5px;color:#008080;font-weight:bold;left:520.8px;transform:scaleX(1.007);transform-origin:left center;">New</span>
<div class="cb" style="left:500px;top:521px;width:50px;height:35px;"></div>
<svg style="position:absolute;left:500px;top:521px;" width="50" height="35" viewBox="0 0 50 35"><path d="M5.5 19.5 V10.5 H8.5 L9.5 9.5 H13 V11.5 H16.5 V13" fill="#ffff40" stroke="#000"/><path d="M5.5 19.7 L9 13.7 H19.7 L16 19.7 Z" fill="#808000" stroke="#000"/><path d="M13.5 8.5 Q16 6 18.8 9.5 M19 9.8 L16.2 9.6 M19 9.8 L19.4 7" stroke="#000" fill="none"/></svg>
<span class="t " style="top:529.00px;font-size:9.5px;line-height:9.5px;color:#008080;font-weight:bold;left:520.8px;transform:scaleX(1.06);transform-origin:left center;">Open</span>
<div class="cb" style="left:500px;top:561px;width:50px;height:35px;"></div>
<svg style="position:absolute;left:500px;top:561px;" width="50" height="35" viewBox="0 0 50 35"><g transform="translate(5,7)"><rect x=".5" y=".5" width="13" height="13" fill="#808000" stroke="#000"/><rect x="3" y="1" width="8" height="6" fill="#c0c0c0"/><rect x="3" y="9" width="8.5" height="4.5" fill="#000"/><rect x="8.7" y="10" width="1.8" height="3" fill="#d0d0d0"/><rect x="12" y="1" width="1" height="1" fill="#fff"/></g></svg>
<span class="t " style="top:570.00px;font-size:9.5px;line-height:9.5px;color:#008080;font-weight:bold;left:520px;transform:scaleX(1.0812000000000002);transform-origin:left center;">Save</span>
<div class="cb" style="left:500px;top:601px;width:50px;height:35px;"></div>
<svg style="position:absolute;left:500px;top:601px;" width="50" height="35" viewBox="0 0 50 35"><g transform="translate(5,7)"><rect x=".5" y=".5" width="13" height="13" fill="#808000" stroke="#000"/><rect x="3" y="1" width="8" height="6" fill="#c0c0c0"/><rect x="3" y="9" width="8.5" height="4.5" fill="#000"/><rect x="8.7" y="10" width="1.8" height="3" fill="#d0d0d0"/><rect x="12" y="1" width="1" height="1" fill="#fff"/></g></svg>
<span class="t " style="top:607.00px;font-size:9.5px;line-height:9.5px;color:#008080;font-weight:bold;left:520.9px;transform:scaleX(1.0812000000000002);transform-origin:left center;">Save</span>
<span class="t " style="top:616.00px;font-size:9.5px;line-height:9.5px;color:#008080;font-weight:bold;left:524px;transform:scaleX(1.1130000000000002);transform-origin:left center;">As</span>
<div class="cb" style="left:500px;top:641px;width:50px;height:35px;"></div>
<svg style="position:absolute;left:500px;top:641px;" width="50" height="35" viewBox="0 0 50 35"><path d="M20 18 L16.3 22 L20 26 Z M27.5 18 L23.8 22 L27.5 26 Z" fill="#9cc8c8" stroke="#80b8b8" stroke-width=".8"/></svg>
<span class="t " style="top:648.00px;font-size:9.5px;line-height:9.5px;color:#80b8b8;font-weight:bold;left:505.8px;transform:scaleX(1.1024);transform-origin:left center;">Restart</span>
<div class="cb" style="left:500px;top:681px;width:50px;height:35px;"></div>
<svg style="position:absolute;left:500px;top:681px;" width="50" height="35" viewBox="0 0 50 35"><path d="M36.2 26 V19.3 H41.8 V22" fill="none" stroke="#008080" stroke-width="2.5"/><path d="M37.6 22 H46 L41.8 26.2 Z" fill="#008080"/></svg>
<span class="t " style="top:686.00px;font-size:9.5px;line-height:9.5px;color:#008080;font-weight:bold;left:504.8px;transform:scaleX(1.06);transform-origin:left center;">Single</span>
<span class="t " style="top:694.00px;font-size:9.5px;line-height:9.5px;color:#008080;font-weight:bold;left:510px;transform:scaleX(1.06);transform-origin:left center;">Step</span>
<div class="cb" style="left:500px;top:721px;width:50px;height:35px;"></div>
<span class="t " style="top:728.00px;font-size:9.5px;line-height:9.5px;color:#008080;font-weight:bold;left:506.2px;transform:scaleX(1.1660000000000001);transform-origin:left center;">Tool</span>
<span class="t " style="top:738.00px;font-size:9.5px;line-height:9.5px;color:#008080;font-weight:bold;left:514.8px;transform:scaleX(1.0812000000000002);transform-origin:left center;">Setup</span>
<span class="t " style="top:763.00px;font-size:12px;line-height:12px;left:375.5px;width:300px;text-align:center;transform:scaleX(0.885);transform-origin:center center;">Block</span>
<span class="t " style="top:778.00px;font-size:12px;line-height:12px;left:375.5px;width:300px;text-align:center;transform:scaleX(0.885);transform-origin:center center;">Delete</span>
<div class="chk" style="left:518px;top:795px;width:13px;height:13px;"></div>
<svg style="position:absolute;left:520px;top:797px;" width="9" height="9" viewBox="0 0 9 9"><path d="M1 3.5 L3.5 6 L8 1.5" stroke="#000" stroke-width="2" fill="none"/></svg>
<span class="t " style="top:818.00px;font-size:12px;line-height:12px;left:376.5px;width:300px;text-align:center;transform:scaleX(0.885);transform-origin:center center;">File:</span>
<div class="rad" style="left:513px;top:841px;width:12px;height:12px;"></div>
<span class="t " style="top:842.00px;font-size:12px;line-height:12px;left:530px;transform:scaleX(0.885);transform-origin:left center;">1</span>
<div class="rad" style="left:513px;top:860px;width:12px;height:12px;"></div>
<span class="t " style="top:861.00px;font-size:12px;line-height:12px;left:530px;transform:scaleX(0.885);transform-origin:left center;">2</span>
<div class="rad" style="left:513px;top:879px;width:12px;height:12px;"></div>
<span class="t " style="top:880.00px;font-size:12px;line-height:12px;left:530px;transform:scaleX(0.885);transform-origin:left center;">3</span>
<div class="rad" style="left:513px;top:898px;width:12px;height:12px;"></div>
<span class="t " style="top:899.00px;font-size:12px;line-height:12px;left:530px;transform:scaleX(0.885);transform-origin:left center;">4</span>
<div class="rad" style="left:513px;top:917px;width:12px;height:12px;"></div>
<span class="t " style="top:918.00px;font-size:12px;line-height:12px;left:530px;transform:scaleX(0.885);transform-origin:left center;">5</span>
<div class="rad on" style="left:513px;top:937px;width:12px;height:12px;"></div>
<span class="t " style="top:938.00px;font-size:12px;line-height:12px;left:530px;transform:scaleX(0.885);transform-origin:left center;">6</span>
<div class="rad" style="left:513px;top:957px;width:12px;height:12px;"></div>
<span class="t " style="top:958.00px;font-size:12px;line-height:12px;left:530px;transform:scaleX(0.885);transform-origin:left center;">7</span>
<div class="" style="left:555px;top:481px;width:479px;height:484px;background:#f0f0f0;overflow:hidden"></div>
<div class="" style="left:626px;top:481px;width:408px;height:484px;background:#fff"></div>
<svg style="position:absolute;left:614px;top:482px;" width="10" height="15" viewBox="0 0 10 15"><path d="M1 1 L8.5 7.5 L1 14 Z" fill="#008080"/></svg>
<div style="left:555px;top:481px;width:479px;height:484px;overflow:hidden;font:13.33px/16px 'Liberation Mono',monospace;white-space:pre">
<span class="t" style="right:427px;top:1px;line-height:16px;">1</span>
<span class="t" style="left:72px;top:1px;line-height:16px"><span style="font-size:10px">%</span></span>
<span class="t" style="right:427px;top:17px;line-height:16px;">2</span>
<span class="t" style="left:72px;top:17px;line-height:16px"><span style="color:#168a16;-webkit-text-stroke:.25px #168a16">(1001)</span></span>
<span class="t" style="right:427px;top:33px;line-height:16px;">3</span>
<span class="t" style="left:72px;top:33px;line-height:16px"><span style="color:#168a16;-webkit-text-stroke:.25px #168a16">(T4 D=22 CR=0 TAPER=60deg - ZMIN=-2.25 - spot drill)</span></span>
<span class="t" style="right:427px;top:49px;line-height:16px;">4</span>
<span class="t" style="left:72px;top:49px;line-height:16px"><b>N10 G90 G94</b></span>
<span class="t" style="right:427px;top:65px;line-height:16px;">5</span>
<span class="t" style="left:72px;top:65px;line-height:16px"><b>N15 G17</b></span>
<span class="t" style="right:427px;top:81px;line-height:16px;">6</span>
<span class="t" style="left:72px;top:81px;line-height:16px"><b>N20 G21</b></span>
<span class="t" style="right:427px;top:97px;line-height:16px;">7</span>
<span class="t" style="left:72px;top:97px;line-height:16px"><b>N25 G53 G0 </b><span style="color:#008080;-webkit-text-stroke:.25px #008080">Z0</span></span>
<span class="t" style="right:427px;top:113px;line-height:16px;">8</span>
<span class="t" style="right:427px;top:129px;line-height:16px;">9</span>
<span class="t" style="left:72px;top:129px;line-height:16px"><span style="color:#168a16;-webkit-text-stroke:.25px #168a16">(Engrave1 18)</span></span>
<span class="t" style="right:427px;top:145px;line-height:16px;">10</span>
<span class="t" style="left:72px;top:145px;line-height:16px"><b>N30 M9</b></span>
<span class="t" style="right:427px;top:161px;line-height:16px;">11</span>
<span class="t" style="right:427px;top:177px;line-height:16px;">12</span>
<span class="t" style="left:72px;top:177px;line-height:16px"><b>N45 G54</b></span>
<span class="t" style="right:427px;top:193px;line-height:16px;">13</span>
<span class="t" style="left:72px;top:193px;line-height:16px"><b>N50 M8</b></span>
<span class="t" style="right:427px;top:209px;line-height:16px;">14</span>
<span class="t" style="left:72px;top:209px;line-height:16px"><b>N60 G0 </b><span style="color:#008080;-webkit-text-stroke:.25px #008080">X13.54 Y-25.68</span></span>
<span class="t" style="right:427px;top:225px;line-height:16px;">15</span>
<span class="t" style="left:72px;top:225px;line-height:16px"><b>N65 G0 G43 </b><span style="color:#008080;-webkit-text-stroke:.25px #008080">Z15 H4</span></span>
<span class="t" style="right:427px;top:241px;line-height:16px;">16</span>
<span class="t" style="left:72px;top:241px;line-height:16px"><b>N70 G0 </b><span style="color:#008080;-webkit-text-stroke:.25px #008080">Z5</span></span>
<span class="t" style="right:427px;top:257px;line-height:16px;">17</span>
<span class="t" style="left:72px;top:257px;line-height:16px"><b>N75 G1 </b><span style="color:#008080;-webkit-text-stroke:.25px #008080">Z-0.01 F2000</span></span>
<span class="t" style="right:427px;top:273px;line-height:16px;">18</span>
<span class="t" style="left:72px;top:273px;line-height:16px"><b>N80 G1 </b><span style="color:#008080;-webkit-text-stroke:.25px #008080">X14.09 Y-25.26 Z-0.75 F1500</span></span>
<span class="t" style="right:427px;top:289px;line-height:16px;">19</span>
<span class="t" style="left:72px;top:289px;line-height:16px"><b>N85 G1 </b><span style="color:#008080;-webkit-text-stroke:.25px #008080">X13.75 Y-24.84 Z-0.01</span></span>
<span class="t" style="right:427px;top:305px;line-height:16px;">20</span>
<span class="t" style="left:72px;top:305px;line-height:16px"><b>N90 G1 </b><span style="color:#008080;-webkit-text-stroke:.25px #008080">X14.09 Y-25.26 Z-0.75</span></span>
<span class="t" style="right:427px;top:321px;line-height:16px;">21</span>
<span class="t" style="left:72px;top:321px;line-height:16px"><b>N95 G1 </b><span style="color:#008080;-webkit-text-stroke:.25px #008080">X14.15 Y-25.25</span></span>
<span class="t" style="right:427px;top:337px;line-height:16px;">22</span>
<span class="t" style="left:72px;top:337px;line-height:16px"><b>N100 G1 </b><span style="color:#008080;-webkit-text-stroke:.25px #008080">X14.49 Y-25.22 Z-0.81</span></span>
<span class="t" style="right:427px;top:353px;line-height:16px;">23</span>
<span class="t" style="left:72px;top:353px;line-height:16px"><b>N105 G1 </b><span style="color:#008080;-webkit-text-stroke:.25px #008080">X14.84 Y-25.15 Z-0.93</span></span>
<span class="t" style="right:427px;top:369px;line-height:16px;">24</span>
<span class="t" style="left:72px;top:369px;line-height:16px"><b>N110 G1 </b><span style="color:#008080;-webkit-text-stroke:.25px #008080">X15.21 Y-25.04 Z-1.13</span></span>
<span class="t" style="right:427px;top:385px;line-height:16px;">25</span>
<span class="t" style="left:72px;top:385px;line-height:16px"><b>N115 G1 </b><span style="color:#008080;-webkit-text-stroke:.25px #008080">X15.59 Y-24.87 Z-1.42</span></span>
<span class="t" style="right:427px;top:401px;line-height:16px;">26</span>
<span class="t" style="left:72px;top:401px;line-height:16px"><b>N120 G1 </b><span style="color:#008080;-webkit-text-stroke:.25px #008080">X15.98 Y-24.65 Z-1.8</span></span>
<span class="t" style="right:427px;top:417px;line-height:16px;">27</span>
<span class="t" style="left:72px;top:417px;line-height:16px"><b>N125 G1 </b><span style="color:#008080;-webkit-text-stroke:.25px #008080">X16.01 Y-24.66 Z-1.77</span></span>
<span class="t" style="right:427px;top:433px;line-height:16px;">28</span>
<span class="t" style="left:72px;top:433px;line-height:16px"><b>N130 G1 </b><span style="color:#008080;-webkit-text-stroke:.25px #008080">X16.48 Y-24.94 Z-1.3</span></span>
<span class="t" style="right:427px;top:449px;line-height:16px;">29</span>
<span class="t" style="left:72px;top:449px;line-height:16px"><b>N135 G1 </b><span style="color:#008080;-webkit-text-stroke:.25px #008080">X16.9 Y-25.1 Z-1.01</span></span>
<span class="t" style="right:427px;top:465px;line-height:16px;">30</span>
<span class="t" style="left:72px;top:465px;line-height:16px"><b>N140 G1 </b><span style="color:#008080;-webkit-text-stroke:.25px #008080">X17.26 Y-25.19 Z-0.86</span></span>
</div>
<div class="" style="left:1034px;top:481px;width:15px;height:484px;background:linear-gradient(90deg,#e4e4e4,#efefef 25%,#f2f2f2 60%,#e9e9e9)"></div>
<svg style="position:absolute;left:1034px;top:481px;" width="16" height="484" viewBox="0 0 16 484"><path d="M4.7 11.2 L8.5 6.6 L12.3 11.2 Z" fill="#404040"/><path d="M4.7 471.3 L8.5 475.9 L12.3 471.3 Z" fill="#505050"/></svg>
<div class="" style="left:1034px;top:499px;width:15px;height:15px;border:1px solid #8c8c8c;border-radius:2px;box-shadow:inset 0 0 0 1px #fafafa;background:linear-gradient(90deg,#f5f5f5 0,#e9e9e9 48%,#d4d4d4 52%,#cfcfcf 100%)"></div>
<div class="" style="left:550px;top:965px;width:484px;height:15px;background:linear-gradient(#e4e4e4,#efefef 25%,#f2f2f2 60%,#e9e9e9)"></div>
<svg style="position:absolute;left:555px;top:965px;" width="478" height="15" viewBox="0 0 478 15"><path d="M4.8 4 L1 7.5 L4.8 11 Z" fill="#404040"/><path d="M468.2 4 L472 7.5 L468.2 11 Z" fill="#505050"/></svg>
<div class="" style="left:569px;top:966px;width:88px;height:13px;border:1px solid #8c8c8c;border-radius:2px;box-shadow:inset 0 0 0 1px #fafafa;background:linear-gradient(#f5f5f5 0,#e9e9e9 48%,#d4d4d4 52%,#cfcfcf 100%)"></div>
<svg style="position:absolute;left:555px;top:965px;" width="478" height="15" viewBox="0 0 478 15"><path d="M54.5 5 v5 M56.5 5 v5 M58.5 5 v5 M60.5 5 v5" stroke="#606060" stroke-width="1"/></svg>
<div class="wb" style="left:509px;top:982px;width:36px;height:22px;"></div>
<span class="t " style="top:987.00px;font-size:12px;line-height:12px;left:377px;width:300px;text-align:center;transform:scaleX(0.885);transform-origin:center center;">Help</span>
<div class="ed" style="left:555px;top:982px;width:460px;height:22px;"></div>
<span class="t " style="top:987.00px;font-size:12px;line-height:12px;left:559px;transform:scaleX(0.885);transform-origin:left center;">g1 g53 z0 f10</span>
<svg style="position:absolute;left:1002px;top:991px;" width="7" height="4" viewBox="0 0 7 4"><path d="M0 0h7L3.5 4z" fill="#000"/></svg>
<div class="wb" style="left:1018px;top:981px;width:36px;height:22px;"></div>
<span class="t " style="top:987.00px;font-size:12px;line-height:12px;left:885.5px;width:300px;text-align:center;transform:scaleX(0.885);transform-origin:center center;">Send</span>
<span class="t " style="top:494.00px;font-size:13px;line-height:13px;left:1053.5px;transform:scaleX(0.96);transform-origin:left center;">units</span>
<div class="rad on" style="left:1091px;top:487px;width:12px;height:12px;"></div>
<span class="t " style="top:488.00px;font-size:12px;line-height:12px;left:1107px;transform:scaleX(0.885);transform-origin:left center;">mm</span>
<div class="rad" style="left:1091px;top:504px;width:12px;height:12px;"></div>
<span class="t " style="top:504.00px;font-size:12px;line-height:12px;left:1107.5px;transform:scaleX(0.885);transform-origin:left center;">inch</span>
<span class="t " style="top:492.00px;font-size:13px;line-height:13px;left:1137.5px;transform:scaleX(1.06);transform-origin:left center;">coord</span>
<div class="rad" style="left:1183px;top:487px;width:12px;height:12px;"></div>
<span class="t " style="top:488.00px;font-size:12px;line-height:12px;left:1200px;transform:scaleX(0.885);transform-origin:left center;">rel</span>
<div class="rad on" style="left:1183px;top:504px;width:12px;height:12px;"></div>
<span class="t " style="top:504.00px;font-size:12px;line-height:12px;left:1201px;transform:scaleX(0.885);transform-origin:left center;">abs</span>
<span class="t " style="top:487.00px;font-size:11px;line-height:11px;left:1234.8px;transform:scaleX(0.94);transform-origin:left center;">Simulate</span>
<div class="chk" style="left:1283px;top:485px;width:13px;height:13px;"></div>
<div class="wb" style="left:1229px;top:502px;width:68px;height:18px;"></div>
<span class="t " style="top:505.00px;font-size:12px;line-height:12px;left:1113px;width:300px;text-align:center;transform:scaleX(0.885);transform-origin:center center;">run</span>
<span class="t " style="top:540.00px;font-size:12px;line-height:12px;left:1052.5px;width:300px;text-align:center;transform:scaleX(0.885);transform-origin:center center;">6</span>
<span class="t " style="top:540.00px;font-size:12px;line-height:12px;left:1092.5px;width:300px;text-align:center;transform:scaleX(0.885);transform-origin:center center;">4</span>
<span class="t " style="top:540.00px;font-size:12px;line-height:12px;left:1132px;width:300px;text-align:center;transform:scaleX(0.885);transform-origin:center center;">10</span>
<div class="" style="left:1185px;top:561px;width:35px;height:155px;background:#808080"></div>
<div class="" style="left:1185px;top:706px;width:35px;height:10px;background:#003c00"></div>
<div class="" style="left:1225px;top:561px;width:35px;height:155px;background:#808080"></div>
<div class="" style="left:1225px;top:709px;width:35px;height:7px;background:#003c00"></div>
<div class="" style="left:1265px;top:561px;width:35px;height:155px;background:#808080"></div>
<div class="" style="left:1265px;top:701px;width:35px;height:15px;background:#003c00"></div>
<span class="t " style="top:735.00px;font-size:12px;line-height:12px;left:1105px;width:300px;text-align:center;transform:scaleX(0.885);transform-origin:center center;">Vacuum ON</span>
<div class="led" style="left:1243px;top:756px;width:24px;height:10px;"></div>
<span class="t " style="top:775.00px;font-size:12px;line-height:12px;left:1105px;width:300px;text-align:center;transform:scaleX(0.885);transform-origin:center center;">Vacuum Zone 1</span>
<div class="ledon" style="left:1243px;top:796px;width:24px;height:10px;"></div>
</div></body></html>
